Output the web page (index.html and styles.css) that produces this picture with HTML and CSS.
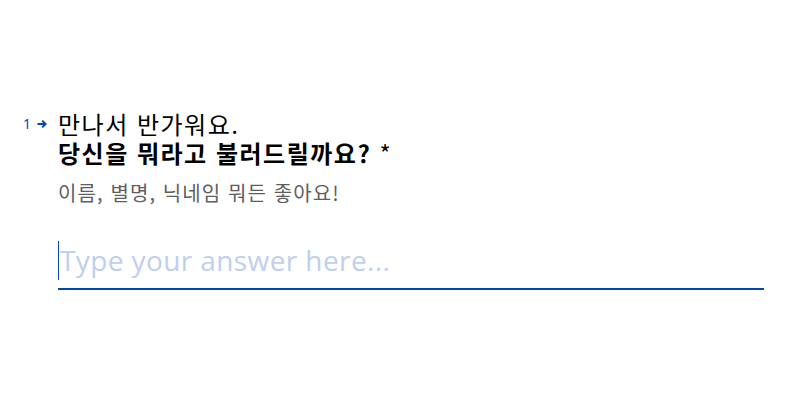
FILE: index.html
```html
<!DOCTYPE html>
<html lang="ko">
<head>
<meta charset="utf-8">
<title>Question</title>
<link rel="stylesheet" href="styles.css">
</head>
<body>
<main class="page">
  <section class="question">
    <div class="counter">
      <span class="num">1</span>
      <svg class="arrow" width="10" height="10" viewBox="0 0 10 10" aria-hidden="true">
        <path d="M0.5 5 H8.5 M5.2 1.6 L8.6 5 L5.2 8.4" fill="none" stroke="#0445AF" stroke-width="2"/>
      </svg>
    </div>
    <div class="content">
      <h1 class="title">
        <span class="line">만나서 반가워요.</span>
        <span class="line"><strong>당신을 뭐라고 불러드릴까요?</strong> <span class="req">*</span></span>
      </h1>
      <p class="desc">이름, 별명, 닉네임 뭐든 좋아요!</p>
      <div class="answer">
        <span class="caret"></span>
        <span class="placeholder">Type your answer here...</span>
      </div>
    </div>
  </section>
</main>
</body>
</html>
```
FILE: styles.css
```css
html, body {
  margin: 0;
  padding: 0;
  background: #ffffff;
}
body {
  width: 810px;
  height: 405px;
  overflow: hidden;
  font-family: "Noto Sans", "Noto Sans CJK KR", sans-serif;
}
.page {
  padding-top: 109px;
}
.question {
  display: flex;
  align-items: flex-start;
}
.counter {
  width: 35px;
  padding-left: 23px;
  box-sizing: content-box;
  display: flex;
  align-items: center;
  gap: 6px;
  height: 29px;
  color: #0445AF;
  font-family: "Noto Sans", sans-serif;
  font-size: 14px;
}
.counter .num {
  line-height: 1;
}
.arrow {
  display: block;
}
.content {
  width: 706px;
}
.title {
  margin: 0;
  font-family: "Noto Sans CJK KR", sans-serif;
  font-size: 24px;
  font-weight: 400;
  line-height: 29px;
  letter-spacing: 1.5px;
  color: #000000;
}
.title .line {
  display: block;
}
.title strong {
  font-weight: 700;
}
.req {
  font-weight: 400;
}
.desc {
  margin: 12px 0 0;
  font-family: "Noto Sans CJK KR", sans-serif;
  font-size: 20px;
  line-height: 28px;
  letter-spacing: 1.1px;
  color: #5e5e5e;
}
.answer {
  margin-top: 34px;
  display: flex;
  align-items: center;
  border-bottom: 2px solid #0445AF;
  padding-bottom: 8px;
}
.caret {
  width: 1px;
  height: 39px;
  background: #0445AF;
  flex: none;
}
.placeholder {
  font-family: "Open Sans", sans-serif;
  font-size: 28px;
  line-height: 39px;
  letter-spacing: 0.4px;
  color: #bfcfed;
  padding-left: 1px;
}
```
